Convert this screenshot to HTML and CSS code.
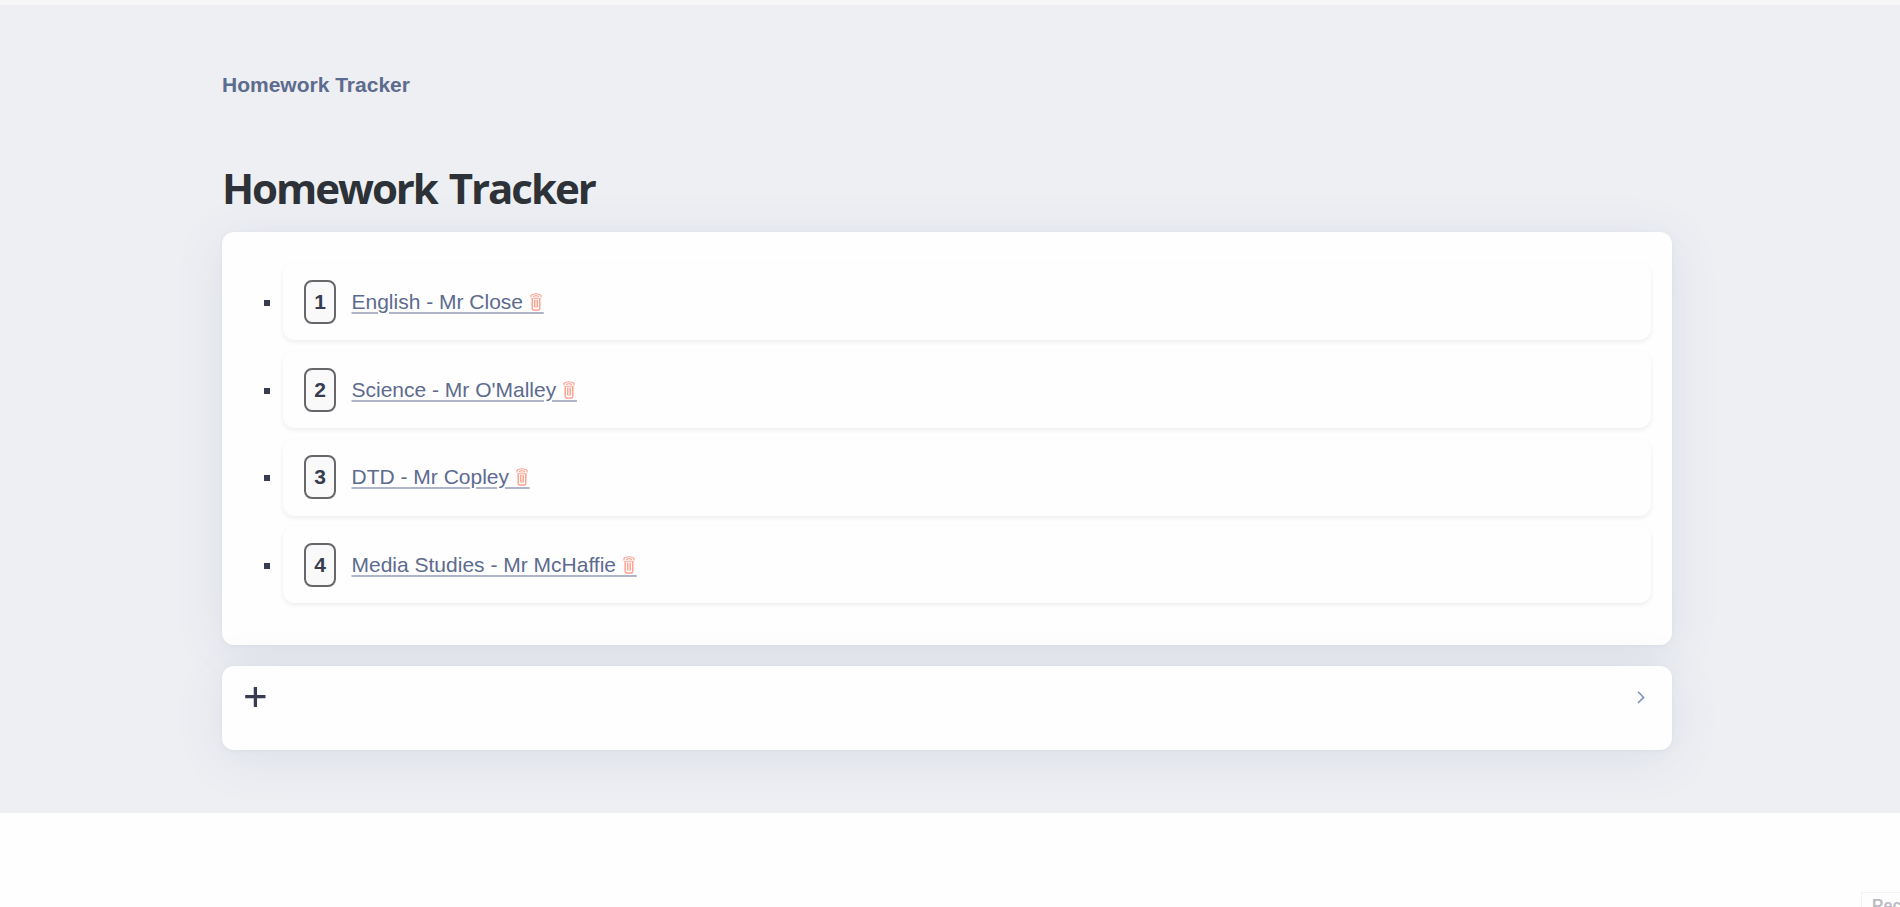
FILE: index.html
```html
<!DOCTYPE html>
<html lang="en">
<head>
<meta charset="utf-8">
<title>Homework Tracker</title>
<link rel="stylesheet" href="styles.css">
</head>
<body>
<svg class="defs" width="0" height="0" aria-hidden="true">
  <symbol id="trash" viewBox="0 0 12 18">
    <path d="M1 4.500V2.300Q6 -.8 11 2.300V4.500M3 3.600Q6 2 9 3.600" fill="none" stroke="currentColor" stroke-width="1.100"/>
    <path d="M2.200 5V15.800M9.800 5V15.800M2 16.300Q6 18 10 16.300" fill="none" stroke="currentColor" stroke-width="1.400"/>
    <path d="M3 5.200H9M4.500 6.500V14.500M6 6.500V15M7.500 6.500V14.500" fill="none" stroke="currentColor" stroke-width=".9"/>
  </symbol>
</svg>
<div class="page">
  <main class="main">
    <p class="site-name">Homework Tracker</p>
    <h1 class="title">Homework Tracker</h1>
    <section class="card list-card">
      <ul class="list">
        <li class="item"><span class="badge">1</span><a class="link">English - Mr Close&nbsp;<span class="pad">&nbsp;</span><svg class="trash"><use href="#trash"/></svg></a></li>
        <li class="item"><span class="badge">2</span><a class="link">Science - Mr O'Malley&nbsp;<span class="pad">&nbsp;</span><svg class="trash"><use href="#trash"/></svg></a></li>
        <li class="item"><span class="badge">3</span><a class="link">DTD - Mr Copley&nbsp;<span class="pad">&nbsp;</span><svg class="trash"><use href="#trash"/></svg></a></li>
        <li class="item"><span class="badge">4</span><a class="link">Media Studies - Mr McHaffie&nbsp;<span class="pad">&nbsp;</span><svg class="trash"><use href="#trash"/></svg></a></li>
      </ul>
    </section>
    <section class="card add-card">
      <svg class="plus" viewBox="0 0 21 21"><path d="M.2 9.700H20.500M10.400 0V20" stroke="currentColor" stroke-width="3.300"/></svg>
      <svg class="chevron" viewBox="0 0 8 13"><path d="M1 .8L6.600 6.400L1 12" fill="none" stroke="currentColor" stroke-width="1.600"/></svg>
    </section>
  </main>
  <div class="corner">Rec</div>
</div>
</body>
</html>
```
FILE: styles.css
```css
body {
  margin: 0;
  background: #fefefe;
  color: #373c50;
  font: 21px/32px "Liberation Sans", Arial, sans-serif;
}
.defs { display: block; }
.page {
  position: relative;
  height: 907px;
  overflow: hidden;
}
.main {
  box-sizing: border-box;
  height: 813px;
  padding: 64px 228px 0 222px;
  border-top: 5px solid #f6f6f6;
  background: #edeff3;
  overflow: hidden;
}
.site-name {
  margin: 0;
  color: #5d6b8e;
  font-weight: bold;
}
.title {
  margin: 57px 0 14px;
  color: #2d3238;
  font: bold 42px/60px "Open Sans", sans-serif;
  letter-spacing: -2.050px;
  word-spacing: 3px;
}
.card {
  box-sizing: border-box;
  border-radius: 12px;
  background: #fefefe;
  box-shadow: 0 8px 50px rgba(80, 90, 140, .1), 0 1px 4px rgba(80, 90, 140, .06);
}
.list-card {
  height: 413px;
  padding: 31.400px 21px 0 61px;
}
.list {
  display: grid;
  gap: 10.600px;
  margin: 0;
  padding: 0;
  list-style: none;
}
.item {
  display: flex;
  align-items: center;
  box-sizing: border-box;
  height: 77px;
  padding-left: 21px;
  border-radius: 12px;
  box-shadow: 0 2px 5px rgba(0, 0, 0, .07);
}
.item:nth-child(2) { padding-top: 1px; }
.item::before {
  content: "";
  width: 6px;
  height: 6px;
  margin: 2px 34px 0 -40px;
  background: #373c50;
}
.badge {
  box-sizing: border-box;
  width: 32px;
  height: 44px;
  margin-right: 15.500px;
  border: 2px solid #66666b;
  border-radius: 8px;
  background: #f9f9f9;
  font-weight: bold;
  line-height: 39px;
  text-align: center;
}
.link {
  color: #5d6b8e;
  white-space: nowrap;
  text-decoration: underline #afb4c8 2px;
  text-underline-offset: 3px;
}
.pad { letter-spacing: 9px; }
.trash {
  width: 12px;
  height: 18px;
  margin-left: -14px;
  color: #ff9b88;
  vertical-align: -2px;
}
.add-card {
  display: flex;
  justify-content: space-between;
  height: 84px;
  margin-top: 21px;
  padding: 21px 27px 0 23px;
}
.plus { width: 21px; height: 21px; }
.chevron {
  width: 8px;
  height: 13px;
  margin-top: 4px;
  color: #7d93bd;
}
.corner {
  position: absolute;
  top: 892px;
  left: 1861px;
  width: 60px;
  padding-left: 10px;
  border: 1px solid #f3f3f4;
  color: #bdbbc2;
  font-size: 16px;
  font-weight: bold;
  line-height: 25px;
}
```
